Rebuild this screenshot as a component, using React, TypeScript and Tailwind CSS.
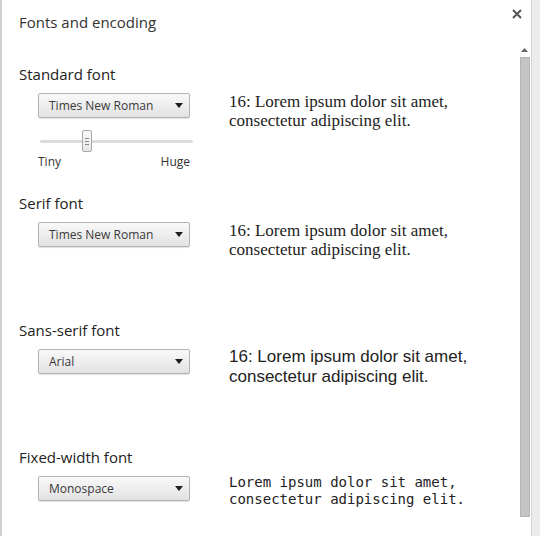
import React from 'react';

const ui = "font-['Open_Sans','DejaVu_Sans',sans-serif]";

function Select({ value }: { value: string }) {
  return (
    <div className="flex h-[25px] w-[152px] items-center justify-between rounded-[2px] border border-[#b3b3b3] bg-linear-to-b from-[#f9f9f9] to-[#e2e2e2] pl-[10px] pr-[6px] text-[12px] text-[#3a3a3a] shadow-[0_1px_1px_rgba(0,0,0,0.12)]">
      <span>{value}</span>
      <svg width="8" height="5" viewBox="0 0 8 5">
        <path d="M0 0h8L4 5z" fill="#1e1e1e" />
      </svg>
    </div>
  );
}

function Slider() {
  return (
    <div className="relative mt-[12px] h-[22px] w-[155px]">
      <div className="absolute left-[2px] right-0 top-[10px] h-[3px] rounded-full bg-[#dcdcdc]" />
      <div className="absolute left-[44px] top-0 flex h-[22px] w-[10px] flex-col items-center justify-center gap-[2px] rounded-[2px] border border-[#a9a9a9] bg-linear-to-b from-[#fbfbfb] to-[#e6e6e6]">
        <div className="h-px w-[4px] bg-[#888]" />
        <div className="h-px w-[4px] bg-[#888]" />
        <div className="h-px w-[4px] bg-[#888]" />
      </div>
    </div>
  );
}

function Section({
  label,
  font,
  sample,
  sampleClass,
  height,
  slider,
}: {
  label: string;
  font: string;
  sample: string[];
  sampleClass: string;
  height: string;
  slider?: boolean;
}) {
  return (
    <div className={height}>
      <div className="h-[20px] text-[15px] leading-[20px] text-[#222]">{label}</div>
      <div className="mt-[9px] flex items-start">
        <div className="ml-[19px] w-[155px]">
          <Select value={font} />
          {slider && (
            <>
              <Slider />
              <div className="mt-[2px] flex w-[152px] justify-between text-[12px] leading-[16px] text-[#333]">
                <span>Tiny</span>
                <span>Huge</span>
              </div>
            </>
          )}
        </div>
        <div className={'ml-[36px] text-[#222] ' + sampleClass}>
          {sample.map((l) => (
            <div key={l} className="whitespace-pre">
              {l}
            </div>
          ))}
        </div>
      </div>
    </div>
  );
}

export default function App() {
  return (
    <div className={'flex h-[536px] w-[540px] overflow-hidden bg-[#ececec] ' + ui}>
      <div className="relative flex h-full w-[532px] border-l-2 border-r border-l-[#cfcfcf] border-r-[#d4d4d4] bg-white">
        <button className="absolute right-[9px] top-[9px] text-[#555]">
          <svg width="10" height="10" viewBox="0 0 10 10">
            <path d="M1 1l8 8M9 1l-8 8" stroke="#555" strokeWidth="2" />
          </svg>
        </button>

        <div className="flex-1 pl-[17px] pt-[11px]">
          <div className="h-[22px] text-[15px] leading-[22px] text-[#333]">Fonts and encoding</div>
          <div className="mt-[31px]">
            <Section
              label="Standard font"
              font="Times New Roman"
              slider
              height="h-[129px]"
              sampleClass="font-['Liberation_Serif',serif] text-[17px] leading-[19px] -mt-[1px]"
              sample={['16: Lorem ipsum dolor sit amet,', 'consectetur adipiscing elit.']}
            />
            <Section
              label="Serif font"
              font="Times New Roman"
              height="h-[127px]"
              sampleClass="font-['Liberation_Serif',serif] text-[17px] leading-[19px] -mt-[1px]"
              sample={['16: Lorem ipsum dolor sit amet,', 'consectetur adipiscing elit.']}
            />
            <Section
              label="Sans-serif font"
              font="Arial"
              height="h-[127px]"
              sampleClass="font-['Liberation_Sans',sans-serif] text-[17px] leading-[20px] -mt-[2px]"
              sample={['16: Lorem ipsum dolor sit amet,', 'consectetur adipiscing elit.']}
            />
            <Section
              label="Fixed-width font"
              font="Monospace"
              height="h-[127px]"
              sampleClass="font-['DejaVu_Sans_Mono',monospace] text-[14px] leading-[17px] -mt-[2px]"
              sample={['Lorem ipsum dolor sit amet,', 'consectetur adipiscing elit.']}
            />
          </div>
        </div>

        {/* scrollbar */}
        <div className="flex w-[13px] flex-col items-center pt-[44px]">
          <div className="flex h-[11px] w-[11px] items-center justify-center">
            <svg width="7" height="4" viewBox="0 0 7 4">
              <path d="M0 4L3.5 0 7 4z" fill="#666" />
            </svg>
          </div>
          <div className="mt-[2px] h-[460px] w-[10px] border border-[#b4b4b4] bg-[#c4c4c4]" />
        </div>
      </div>
      <div className="flex-1" />
    </div>
  );
}
